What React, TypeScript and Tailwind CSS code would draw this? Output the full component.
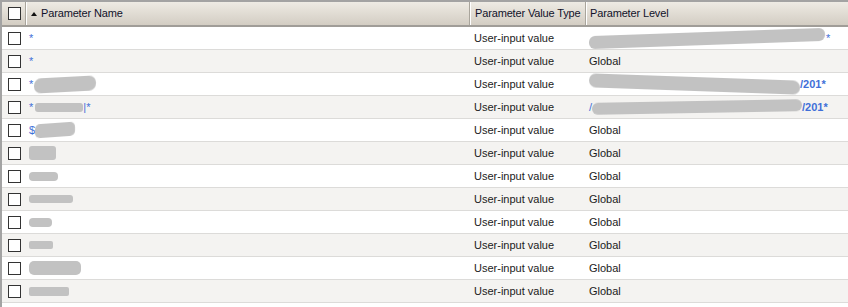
import React from "react";

type Row = {
  name: React.ReactNode;
  level: React.ReactNode;
};

const Blob = ({ className }: { className: string }) => (
  <span className={`inline-block bg-[#c2c2c2] blur-[0.4px] ${className}`} />
);

const Blue = ({ children, className = "" }: { children: React.ReactNode; className?: string }) => (
  <span className={`text-[#3f6fd8] ${className}`}>{children}</span>
);

const rows: Row[] = [
  { name: <Blue>*</Blue>, level: (
    <span className="flex items-center">
      <Blob className="w-[236px] h-[13px] rounded-[6px] skew-y-[-2deg]" />
      <Blue className="ml-[1px]">*</Blue>
    </span>
  ) },
  { name: <Blue>*</Blue>, level: "Global" },
  { name: (
    <span className="flex items-center">
      <Blue>*</Blue>
      <Blob className="w-[62px] h-[15px] rounded-[7px] ml-[1px] skew-y-[-3deg]" />
    </span>
  ), level: (
    <span className="flex items-center">
      <Blob className="w-[211px] h-[14px] rounded-[7px] skew-y-[2deg]" />
      <Blue className="font-bold">/201*</Blue>
    </span>
  ) },
  { name: (
    <span className="flex items-center">
      <Blue>*</Blue>
      <Blob className="w-[48px] h-[9px] rounded-[3px] ml-[2px]" />
      <Blue>|*</Blue>
    </span>
  ), level: (
    <span className="flex items-center">
      <Blue>/</Blue>
      <Blob className="w-[210px] h-[12px] rounded-[6px] skew-y-[-1deg]" />
      <Blue className="font-bold">/201*</Blue>
    </span>
  ) },
  { name: (
    <span className="flex items-center">
      <Blue>$</Blue>
      <Blob className="w-[40px] h-[14px] rounded-[5px] skew-y-[-4deg]" />
    </span>
  ), level: "Global" },
  { name: <Blob className="w-[27px] h-[14px] rounded-[3px]" />, level: "Global" },
  { name: <Blob className="w-[29px] h-[9px] rounded-[4px]" />, level: "Global" },
  { name: <Blob className="w-[44px] h-[8px] rounded-[3px]" />, level: "Global" },
  { name: <Blob className="w-[23px] h-[9px] rounded-[4px]" />, level: "Global" },
  { name: <Blob className="w-[24px] h-[8px] rounded-[2px]" />, level: "Global" },
  { name: <Blob className="w-[52px] h-[14px] rounded-[5px]" />, level: "Global" },
  { name: <Blob className="w-[40px] h-[9px] rounded-[2px]" />, level: "Global" },
];

const Checkbox = () => (
  <span className="block w-[13px] h-[13px] border border-[#333] bg-white" />
);

const cols = "grid grid-cols-[24px_444px_116px_1fr]";

export default function App() {
  return (
    <div
      className="w-[848px] h-[307px] bg-white border-l-2 border-[#a3a3a3] overflow-hidden text-[11px] text-[#1b1b1b]"
      style={{ fontFamily: '"Liberation Sans", Arial, sans-serif' }}
    >
      {/* header */}
      <div className={`${cols} h-[27px] border-t-2 border-t-[#a3a3a3] border-b-2 border-b-[#a09d98] bg-gradient-to-b from-[#eeebe4] to-[#d3cdc3] text-[#10122a] tracking-[-0.15px]`}>
        <div className="flex items-center pl-[6px] border-r border-[#a9a59c]">
          <Checkbox />
        </div>
        <div className="flex items-center pl-[3px] border-l border-white border-r border-r-[#a9a59c]">
          <span className="w-0 h-0 border-l-[3.5px] border-r-[3.5px] border-b-[4px] border-l-transparent border-r-transparent border-b-[#111] ml-[1px] mr-[4px]" />
          Parameter Name
        </div>
        <div className="flex items-center pl-[4px] border-l border-white border-r border-r-[#a9a59c] whitespace-nowrap overflow-hidden">
          Parameter Value Type
        </div>
        <div className="flex items-center pl-[3px] border-l border-white">
          Parameter Level
        </div>
      </div>

      {rows.map((r, i) => (
        <div
          key={i}
          className={`${cols} h-[23px] border-b border-[#dcdbd9] ${i % 2 === 1 ? "bg-[#f4f3f1]" : "bg-white"}`}
        >
          <div className="flex items-center pl-[6px]">
            <Checkbox />
          </div>
          <div className="flex items-center pl-[3px]">{r.name}</div>
          <div className="flex items-center pl-[4px]">User-input value</div>
          <div className="flex items-center pl-[3px]">{r.level}</div>
        </div>
      ))}
    </div>
  );
}
